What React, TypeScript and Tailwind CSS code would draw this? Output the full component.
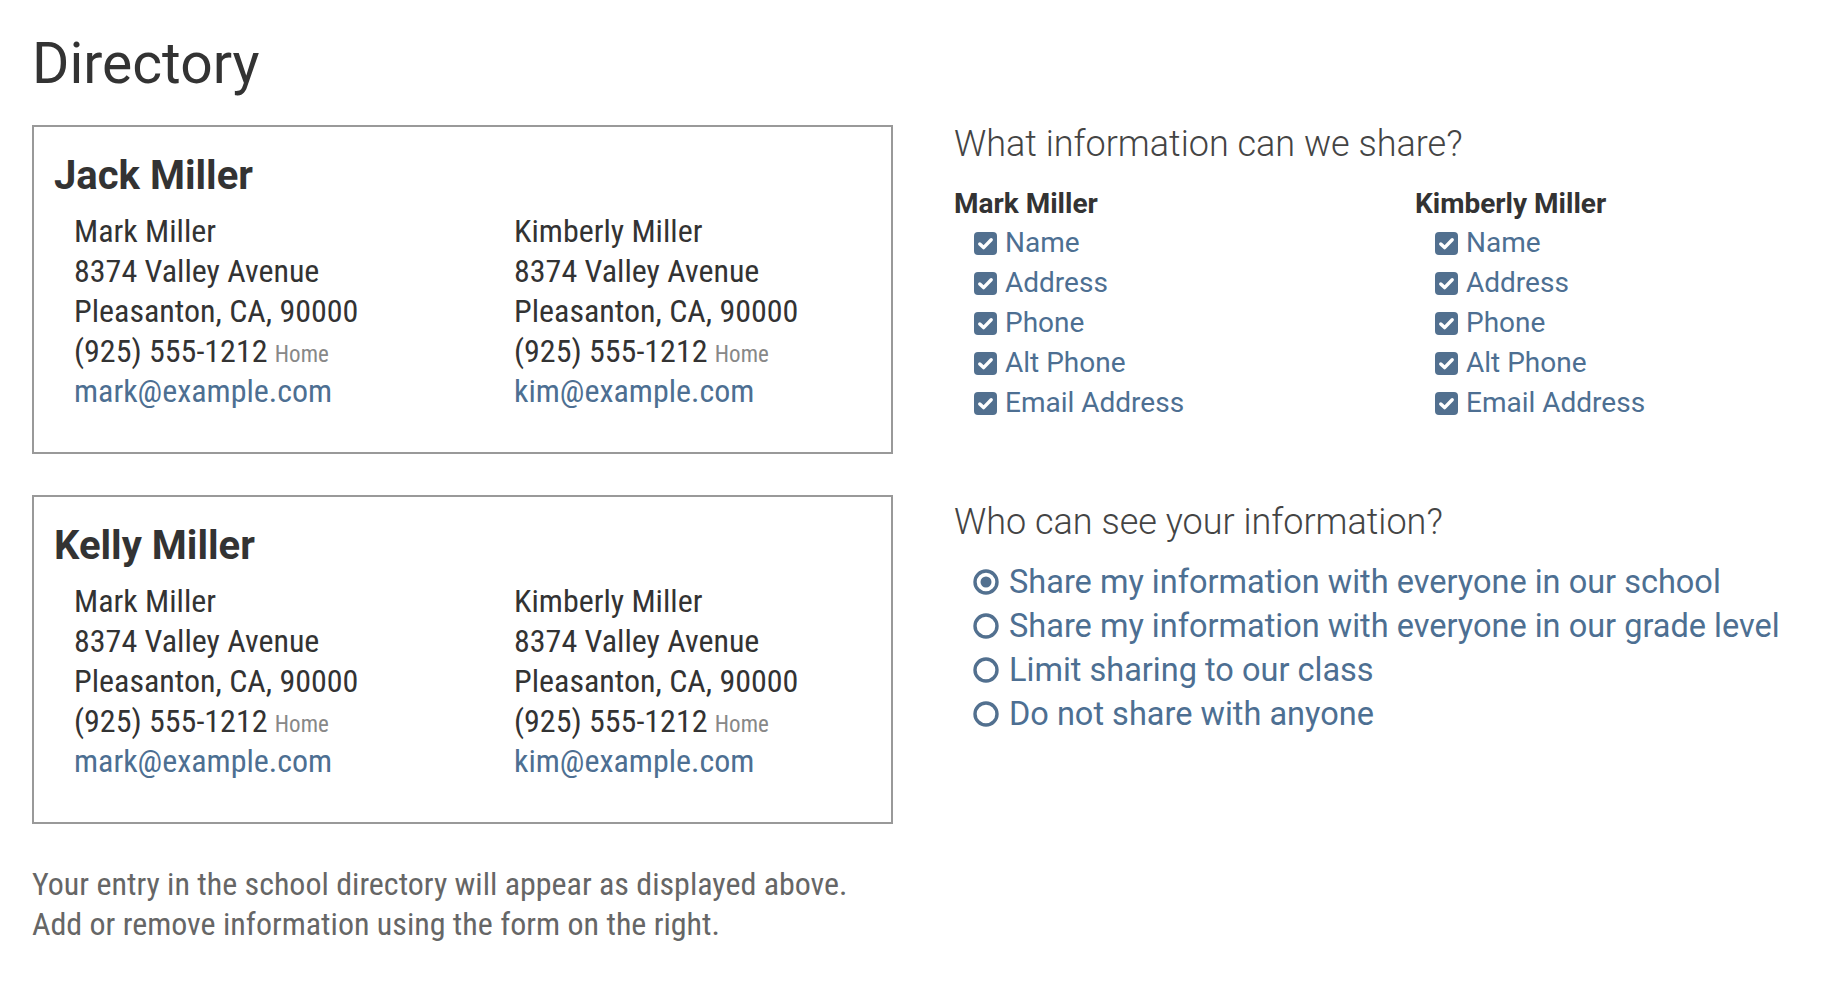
import React from "react";

type Person = {
  name: string;
  street: string;
  city: string;
  phone: string;
  email: string;
};

const parents: Person[] = [
  {
    name: "Mark Miller",
    street: "8374 Valley Avenue",
    city: "Pleasanton, CA, 90000",
    phone: "(925) 555-1212",
    email: "mark@example.com",
  },
  {
    name: "Kimberly Miller",
    street: "8374 Valley Avenue",
    city: "Pleasanton, CA, 90000",
    phone: "(925) 555-1212",
    email: "kim@example.com",
  },
];

const students = ["Jack Miller", "Kelly Miller"];
const fields = ["Name", "Address", "Phone", "Alt Phone", "Email Address"];
const sharing = [
  "Share my information with everyone in our school",
  "Share my information with everyone in our grade level",
  "Limit sharing to our class",
  "Do not share with anyone",
];

function CheckIcon() {
  return (
    <svg width="23" height="23" viewBox="0 0 23 23" className="shrink-0">
      <rect x="0" y="0" width="23" height="23" rx="4" fill="#52708f" />
      <path
        d="M5.8 12 L9.6 15.6 L17.2 7.8"
        fill="none"
        stroke="#fff"
        strokeWidth="3.4"
        strokeLinecap="round"
        strokeLinejoin="round"
      />
    </svg>
  );
}

function RadioIcon({ checked }: { checked: boolean }) {
  return (
    <svg width="26" height="26" viewBox="0 0 26 26" className="shrink-0">
      <circle cx="13" cy="13" r="11" fill="none" stroke="#52708f" strokeWidth="3.4" />
      {checked && <circle cx="13" cy="13" r="5.5" fill="#52708f" />}
    </svg>
  );
}

function StudentCard({ student }: { student: string }) {
  return (
    <div className="border-2 border-[#999] pt-[26px] pb-[41px] pl-[20px]">
      <h2 className="text-[40px] leading-[46px] font-bold text-[#333]">{student}</h2>
      <div className="mt-[12px] grid grid-cols-[440px_1fr] pl-[20px] font-['Roboto_Condensed','Roboto',sans-serif] font-stretch-semi-condensed text-[32px] leading-[40px] text-[#333]">
        {parents.map((p) => (
          <div key={p.name}>
            <div>{p.name}</div>
            <div>{p.street}</div>
            <div>{p.city}</div>
            <div className="h-[40px]">
              {p.phone}{" "}
              <span className="text-[23px] leading-none text-[#888]">Home</span>
            </div>
            <div className="text-[#4d6f92]">{p.email}</div>
          </div>
        ))}
      </div>
    </div>
  );
}

export default function App() {
  return (
    <div className="min-h-screen bg-white px-[32px] pt-[32px] font-['Roboto',sans-serif]">
      <h1 className="text-[57px] leading-[64px] text-[#333]">Directory</h1>
      <div className="mt-[29px] flex items-start gap-[61px]">
        <div className="w-[861px] shrink-0">
          <div className="flex flex-col gap-[41px]">
            {students.map((s) => (
              <StudentCard key={s} student={s} />
            ))}
          </div>
          <p className="mt-[40px] font-['Roboto_Condensed','Roboto',sans-serif] font-stretch-semi-condensed text-[32px] leading-[40px] text-[#666]">
            Your entry in the school directory will appear as displayed above.
            <br />
            Add or remove information using the form on the right.
          </p>
        </div>

        <div className="-mt-[1px] flex-1">
          <h3 className="text-[36px] leading-[40px] font-light text-[#444]">
            What information can we share?
          </h3>
          <div className="mt-[23px] grid grid-cols-[461px_1fr]">
            {parents.map((p) => (
              <div key={p.name}>
                <div className="text-[28px] leading-[34px] font-bold text-[#333]">{p.name}</div>
                <div className="mt-[2px] pl-[20px]">
                  {fields.map((f) => (
                    <div
                      key={f}
                      className="flex h-[40px] items-center gap-[8px] text-[28px] text-[#4d6f92]"
                    >
                      <CheckIcon />
                      <span>{f}</span>
                    </div>
                  ))}
                </div>
              </div>
            ))}
          </div>

          <h3 className="mt-[79px] text-[36px] leading-[40px] font-light text-[#444]">
            Who can see your information?
          </h3>
          <div className="mt-[18px] pl-[19px]">
            {sharing.map((s, i) => (
              <div
                key={s}
                className="flex h-[44px] items-center gap-[10px] text-[32.5px] text-[#4d6f92]"
              >
                <RadioIcon checked={i === 0} />
                <span>{s}</span>
              </div>
            ))}
          </div>
        </div>
      </div>
    </div>
  );
}
